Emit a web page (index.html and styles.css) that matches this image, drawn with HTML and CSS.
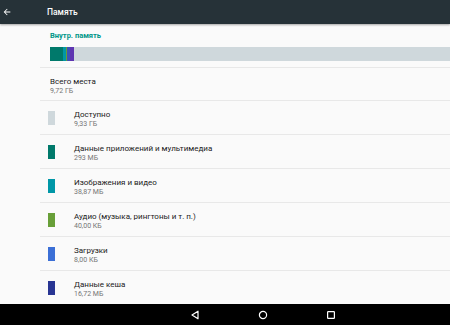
FILE: index.html
```html
<!DOCTYPE html>
<html lang="ru">
<head>
    <meta charset="UTF-8">
    <title>Память</title>
    <link rel="stylesheet" href="styles.css">
</head>
<body>
    <div class="screen">
        <div class="toolbar">
            <svg class="back" width="10" height="10" viewBox="0 0 24 24">
                <path d="M20 11H7.83l5.59-5.59L12 4l-8 8 8 8 1.41-1.41L7.83 13H20v-2z" fill="#fff"/>
            </svg>
            <span class="toolbar-title">Память</span>
        </div>

        <div class="content">
            <div class="section-label">Внутр. память</div>
            <div class="usage-bar">
                <span class="seg" style="width:13px;background:#00796b"></span>
                <span class="seg" style="width:3px;background:#0097a7"></span>
                <span class="seg" style="width:1px;background:#689f38"></span>
                <span class="seg" style="width:3px;background:#3f51b5"></span>
                <span class="seg" style="width:4px;background:#5e35b1"></span>
            </div>

            <div class="row total">
                <div class="row-text">
                    <div class="row-title">Всего места</div>
                    <div class="row-sub">9,72 ГБ</div>
                </div>
            </div>

            <!-- storage categories -->
            <div class="row">
                <span class="swatch" style="background:#cfd8dc"></span>
                <div class="row-text">
                    <div class="row-title">Доступно</div>
                    <div class="row-sub">9,33 ГБ</div>
                </div>
            </div>
            <div class="row">
                <span class="swatch" style="background:#00796b"></span>
                <div class="row-text">
                    <div class="row-title">Данные приложений и мультимедиа</div>
                    <div class="row-sub">293 МБ</div>
                </div>
            </div>
            <div class="row">
                <span class="swatch" style="background:#0097a7"></span>
                <div class="row-text">
                    <div class="row-title">Изображения и видео</div>
                    <div class="row-sub">38,87 МБ</div>
                </div>
            </div>
            <div class="row">
                <span class="swatch" style="background:#689f38"></span>
                <div class="row-text">
                    <div class="row-title">Аудио (музыка, рингтоны и т. п.)</div>
                    <div class="row-sub">40,00 КБ</div>
                </div>
            </div>
            <div class="row">
                <span class="swatch" style="background:#3b6fd6"></span>
                <div class="row-text">
                    <div class="row-title">Загрузки</div>
                    <div class="row-sub">8,00 КБ</div>
                </div>
            </div>
            <div class="row">
                <span class="swatch" style="background:#283593"></span>
                <div class="row-text">
                    <div class="row-title">Данные кеша</div>
                    <div class="row-sub">16,72 МБ</div>
                </div>
            </div>
        </div>

        <div class="navbar">
            <svg width="10" height="10" viewBox="0 0 10 10">
                <path d="M8 1.2 L2 5 L8 8.8 Z" fill="none" stroke="#fff" stroke-width="1.2" stroke-linejoin="round"/>
            </svg>
            <svg width="10" height="10" viewBox="0 0 10 10">
                <circle cx="5" cy="5" r="3.6" fill="none" stroke="#fff" stroke-width="1.2"/>
            </svg>
            <svg width="10" height="10" viewBox="0 0 10 10">
                <rect x="1.6" y="1.6" width="6.8" height="6.8" rx="0.6" fill="none" stroke="#fff" stroke-width="1.2"/>
            </svg>
        </div>
    </div>
</body>
</html>
```

FILE: styles.css
```css
body {
    margin: 0;
    font-family: Roboto, "Noto Sans", sans-serif;
    background-color: #fafafa;
}

.screen {
    width: 450px;
    height: 325px;
    display: flex;
    flex-direction: column;
    overflow: hidden;
}

.toolbar {
    height: 24px;
    flex: none;
    display: flex;
    align-items: center;
    background-color: #263238;
    box-shadow: 0 1px 2px rgba(0, 0, 0, 0.35);
    position: relative;
    z-index: 1;
}

.back {
    margin-left: 2px;
    margin-right: 35px;
}

.toolbar-title {
    color: #fff;
    font-size: 8.5px;
    font-weight: 500;
}

.content {
    flex: 1;
    overflow: hidden;
}

.section-label {
    color: #009688;
    font-size: 7.5px;
    font-weight: 700;
    padding: 7px 0 0 50px;
    height: 13px;
    line-height: 9px;
}

.usage-bar {
    margin: 3px 0 0 50px;
    height: 14px;
    display: flex;
    background-color: #cfd8dc;
}

.seg {
    display: block;
    height: 100%;
}

.row {
    height: 33px;
    margin-left: 40px;
    border-bottom: 1px solid #e8e8e8;
    display: flex;
    align-items: center;
}

.row-text {
    padding-top: 3px;
}

.total {
    margin-top: 6px;
    border-top: 1px solid #e8e8e8;
    height: 32px;
}

.total .row-text {
    margin-left: 10px;
}

.swatch {
    width: 7px;
    height: 14px;
    margin-left: 8px;
    margin-right: 19px;
    flex: none;
}

.row-title {
    color: #212121;
    font-size: 8px;
    line-height: 11px;
}

.row-sub {
    color: #757575;
    font-size: 7px;
    line-height: 9px;
}

.navbar {
    height: 21px;
    flex: none;
    background-color: #000;
    display: flex;
    justify-content: center;
    align-items: center;
    gap: 58px;
    padding-left: 76px;
}
```
